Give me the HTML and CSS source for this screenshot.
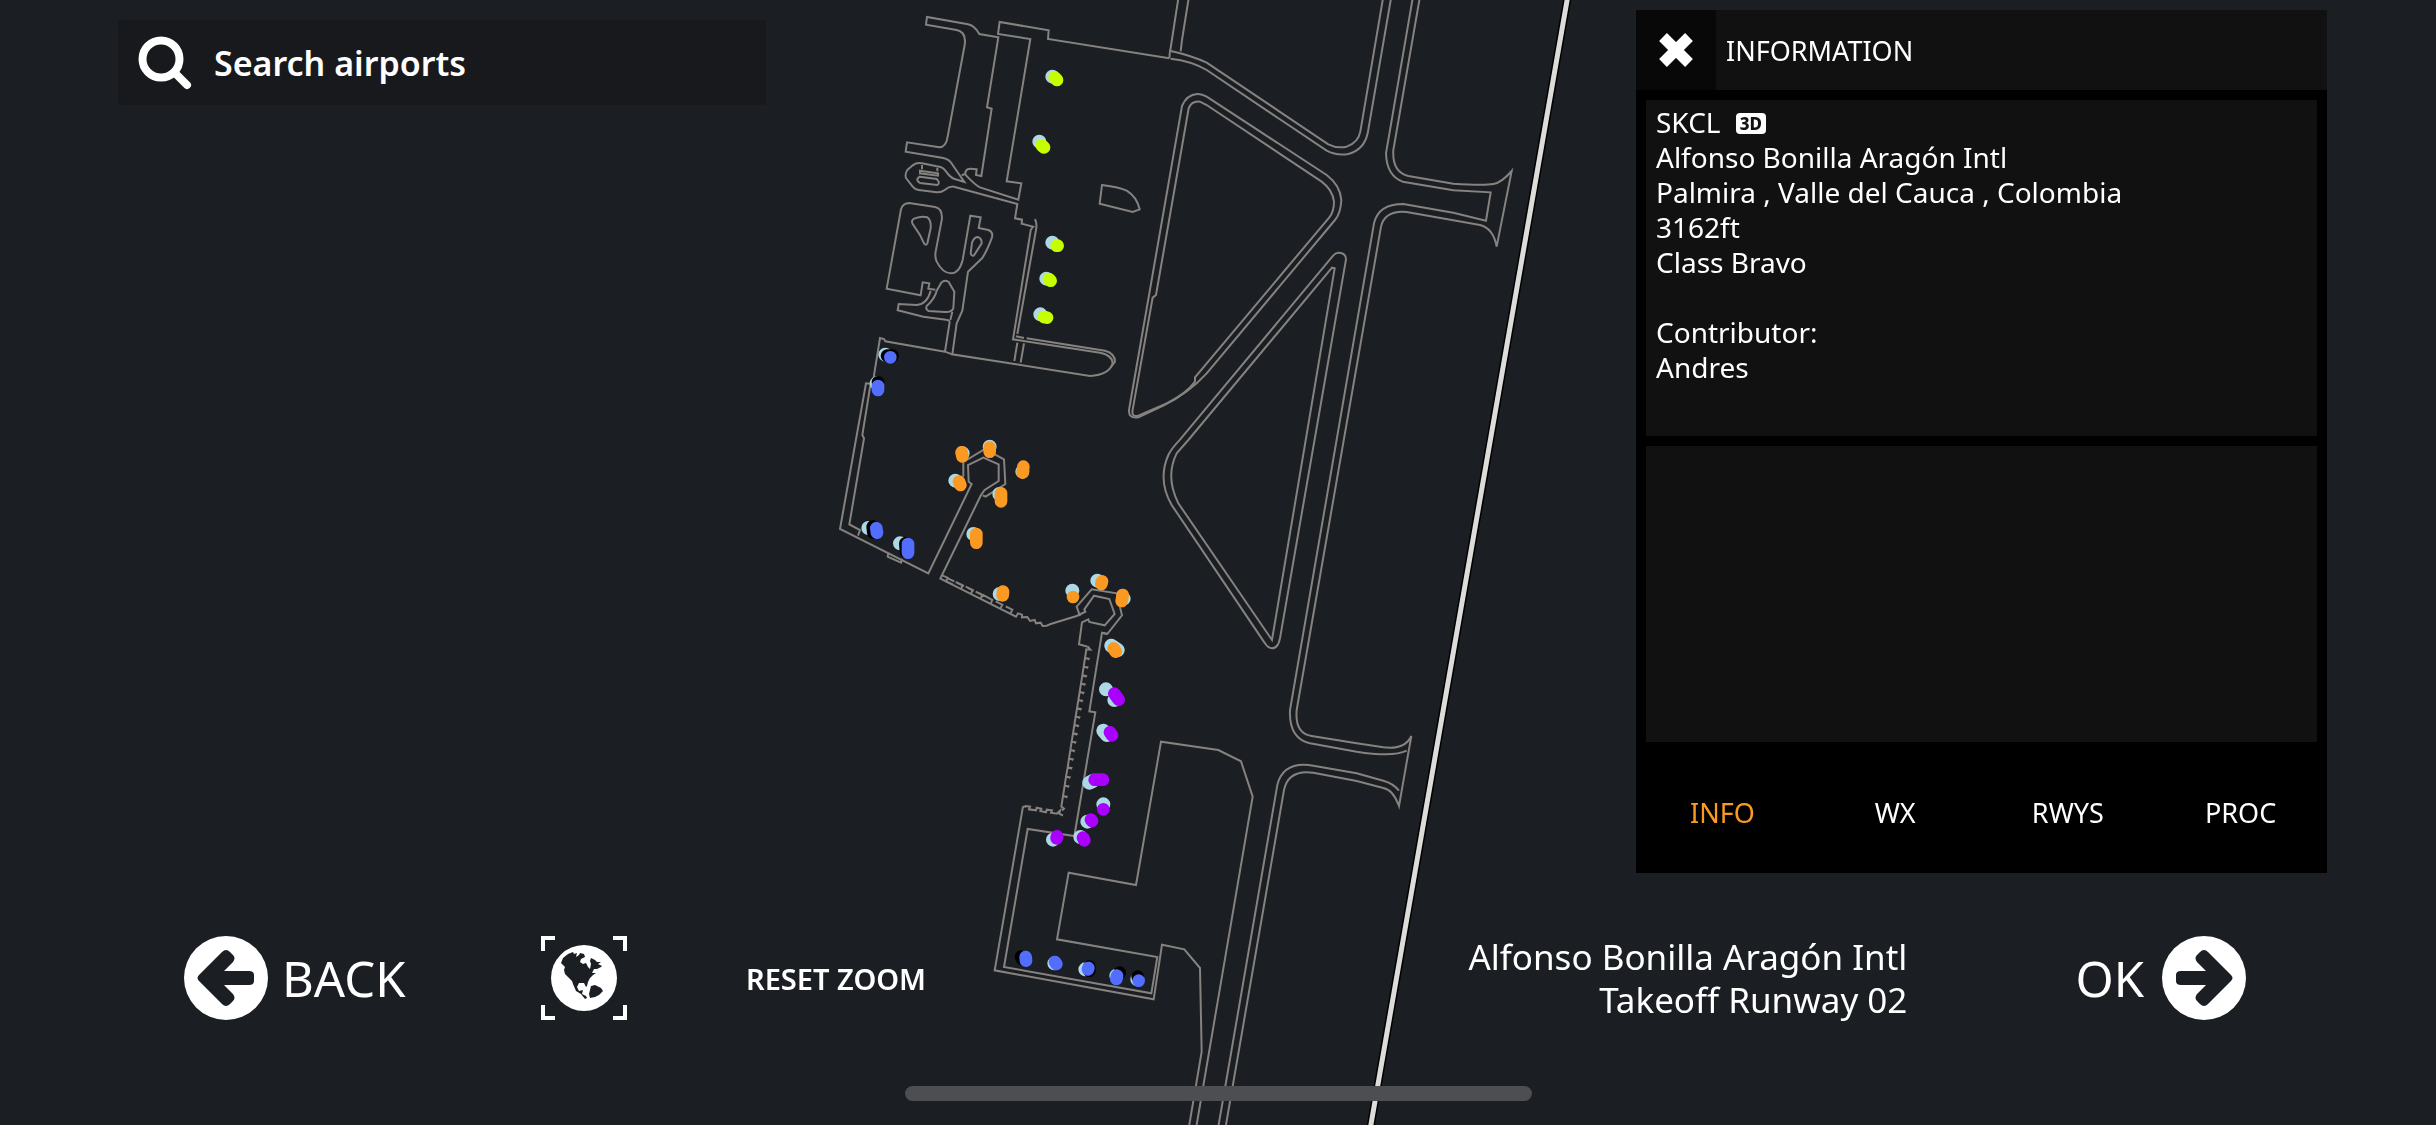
FILE: index.html
```html
<!DOCTYPE html>
<html lang="en">
<head>
  <meta charset="UTF-8">
  <meta name="viewport" content="width=device-width, initial-scale=1.0">
  <title>SKCL - Alfonso Bonilla Aragón Intl</title>
  <link rel="stylesheet" href="styles.css">
</head>
<body>
  <!-- Airport map -->
  <svg class="map" viewBox="0 0 2436 1125" preserveAspectRatio="xMidYMid slice" aria-hidden="true">
    <!-- Runway -->
    <path class="runway-edge" d="M1568 -5L1370 1130"/>
    <path class="runway" d="M1568 -5L1370 1130"/>

    <!-- North apron -->
    <g transform="translate(820 0) scale(.33333)">
      <path class="line" d="M1048 175L684 117L686 91L539 66L534 102L631 117L560 544L604 550L595 599L480 562Q468 557 438 526Q432 518 442 508Q448 504 470 508L468 525L484 528L515 326L501 322L535 112L478 102Q463 76 444 73L321 51L318 74L410 90Q440 96 434 135L383 410Q378 442 358 442L261 427L257 455L370 474Q388 478 396 492L433 546L404 537Q390 532 378 514Q368 500 350 499L306 490Q290 487 278 496L262 510Q254 522 258 534L278 560Q285 569 296 570L350 577Q364 578 374 570Q388 558 402 560L592 612L585 655L606 659L605 671L640 680Q630 690 632 692L579 1018L840 1058Q878 1066 878 1090Q868 1125 810 1128L397 1063L410 970L427 932L444 815L486 775Q500 755 516 712Q520 696 505 690L476 684L482 652L451 647L428 780Q418 820 393 820Q368 820 350 785Q344 770 347 755L366 655Q366 624 345 621L268 609Q248 610 243 628L200 866L302 886L308 847L328 850L325 866L346 869"/>
      <path class="line" d="M332 872Q322 912 290 915L236 912L233 931L310 950L378 959Q392 960 388 972L375 1055L397 1063M375 1055L196 1024L192 1017L180 1014L159 1145M397 935L391 960M425 526L434 522"/>
      <path class="line" d="M350 872L364 848Q374 838 386 846L403 875L400 925Q395 937 375 936L325 933Q316 928 320 918Q345 895 350 872ZM278 672Q272 660 284 655Q305 647 322 652Q334 660 332 685L322 730Q318 738 312 730L300 705ZM452 760L456 728Q462 712 472 711Q486 714 485 730L462 766Q455 770 452 760Z"/>
      <path class="line" d="M299 530L350 537Q362 548 352 555L300 549Q284 540 299 530ZM306 495V508M352 503V514M300 512L354 520V527L300 520Z"/>
      <path class="line" d="M645 657Q652 672 648 690L592 1002M588 1009L612 1014M620 1015L855 1052Q885 1060 885 1085L872 1102M592 1028L583 1083M612 1030L602 1088"/>
      <path class="line" d="M846 555Q900 562 920 572Q950 590 959 628L938 636L839 611Z"/>
    </g>

    <!-- Terminal apron -->
    <g transform="translate(820 330) scale(.33333)">
      <path class="line" d="M158 162L138 160L60 597L325 730L455 462L446 455L444 405L490 383L536 403V453L494 480L483 495L361 746L588 860L594 850L606 854V862L622 861L630 873L644 870L648 880L662 878L668 888L680 887L692 882L770 858L796 845L793 838L822 797L868 807L884 852L854 886L808 876L805 868L786 877L777 943L803 950"/>
      <path class="line" d="M430 440V396L495 357L552 388L556 462L497 500L488 496M152 160L127 315L132 325L88 583L120 600L114 617M205 668L203 680L243 698L246 686M780 858L770 830L815 778L890 790L906 856L862 912L846 908"/>
      <path class="line" d="M366 736L383 743L378 754L398 763M403 754L385 746M407 756L428 766L423 777M432 768L414 760M437 770L458 780L453 791M462 782L444 774M467 785L487 795L482 806M474 788L498 799M497 799L517 810L512 821M527 814L547 824L542 834M557 829L577 839L572 849"/>
    </g>

    <!-- Pier and south apron -->
    <g transform="translate(960 560) scale(.33333)">
      <path class="line" d="M442 222L426 218L388 454L406 457L343 828L203 807L132 1221L574 1300L592 1191L291 1138L326 938L528 975L603 545L775 570L843 604L878 710L709 1700"/>
      <path class="line" d="M198 740Q188 738 188 745L104 1231L581 1318L606 1154L673 1168L720 1224L725 1475L687 1700"/>
      <path class="line" d="M383 259L391 269L379 268L375 294L386 296L384 300M375 294L371 320L382 322L380 326M371 320L367 346L378 348L376 352M367 346L363 371L374 373L372 377M363 371L359 396L370 398L368 402M359 396L355 420L366 422L364 426M355 420L351 445L362 447L360 451M351 445L347 470L358 472L356 476M347 470L343 495L354 497L352 501M343 495L339 520L350 522L348 526M339 520L335 545L346 547L344 551M335 545L331 570L342 572L340 576M331 570L327 596L338 598L336 602M327 596L323 622L334 624L332 628M323 622L318 650L329 652L327 656M318 650L314 677L325 679L323 683M314 677L309 708L320 710L318 714M309 708L304 740L312 746L306 752"/>
      <path class="line" d="M195 738L210 740L207 748L228 751L230 743L244 746L241 753L258 757L260 749L276 751L273 758L290 761L300 752L298 761L309 767"/>
    </g>

    <!-- Taxiways -->
    <g transform="translate(1100 0) scale(.33333)">
      <path class="line" d="M235 -5L211 150M266 -5L246 120L242 154M208 175L210 152Q280 168 320 188L685 433Q710 446 740 440Q775 428 781 395L849 -5M212 176Q275 183 320 210L680 452Q710 468 745 462Q792 450 803 400L873 -5"/>
      <path class="line" d="M938 -5L858 460Q860 528 908 545L1060 571L1172 577L1158 662L1060 638L910 612Q835 612 822 670L570 2130Q566 2215 630 2230L770 2255Q880 2272 920 2252"/>
      <path class="line" d="M959 -5L880 450Q876 516 925 528L1060 551Q1150 557 1180 552Q1205 548 1235 513L1190 740Q1180 685 1140 675L920 636Q855 630 843 680L590 2130Q584 2200 635 2208L770 2230L850 2242Q915 2250 934 2208L897 2418Q880 2370 850 2364L770 2343L640 2318Q565 2308 552 2370L377 3380M897 2372Q880 2350 850 2342L770 2320L640 2297Q550 2282 532 2355L355 3380"/>
      <path class="line" d="M246 318Q260 284 292 282Q305 281 320 290L680 525Q720 555 724 600Q722 640 705 660L320 1120Q265 1180 190 1217Q150 1236 115 1252Q85 1257 87 1230Z"/>
      <path class="line" d="M266 325Q275 302 300 305L320 315L665 545Q698 570 702 605Q702 635 688 652L285 1132V1145Q260 1180 200 1210L115 1247Q97 1252 97 1235L158 893L168 885Z"/>
      <path class="line" d="M700 766Q708 757 718 758Q738 760 738 778L540 1915Q534 1945 516 1945Q504 1944 495 1930L215 1515Q172 1440 205 1365Q215 1345 240 1319Z"/>
      <path class="line" d="M696 803L704 805L516 1920L235 1510Q195 1430 230 1360L265 1320Z"/>
    </g>

    <!-- Stands: cargo -->
    <g transform="translate(820 0) scale(.33333)">
      <path class="dot pale" d="M697 230h0M658 425h0M697 728h0M679 836h0M661 943h0M196 1064h0M170 1150h0"/>
      <path class="dot lime" d="M704 232L711 240M665 436L672 442M710 737L713 737M687 837L692 842M672 951L681 953"/>
      <path class="dot dark" d="M201 1067L218 1067M174 1147h0"/>
      <path class="dot blue" d="M211 1072h0M174 1158V1170"/>
    </g>

    <!-- Stands: terminal -->
    <g transform="translate(820 330) scale(.33333)">
      <path class="dot pale" d="M428 370h0M509 350h0M607 425h0M406 452h0M538 492h0M460 612h0M539 792h0M757 782h0M832 752h0M911 806h0M874 947L893 960M145 594h0M240 640h0"/>
      <path class="dot orange" d="M425 367L427 379M509 353V365M610 410L608 428M417 455L421 465M543 490V514M469 612V638M549 785L548 796M759 801h0M846 754L844 762M908 795L905 813M881 955L887 965"/>
      <path class="dot dark" d="M158 590L160 608M256 640L258 665"/>
      <path class="dot blue" d="M169 595L171 608M264 642V668"/>
    </g>

    <!-- Stands: pier and south apron -->
    <g transform="translate(960 560) scale(.33333)">
      <path class="dot pale" d="M438 388h0M463 420h0M430 512L441 525M388 668L400 662M430 733h0M382 785h0M361 831h0M279 839h0M283 1210h0M376 1228h0M469 1247h0M532 1258h0"/>
      <path class="dot purple" d="M463 401L476 419M450 517L456 526M404 659H429M430 748h0M393 779L396 783M369 833L373 841M291 829L290 835"/>
      <path class="dot dark" d="M183 1190L187 1198M388 1220V1232M479 1238h0M533 1250h0"/>
      <path class="dot blue" d="M197 1191L198 1202M285 1206L289 1212M385 1224L384 1228M471 1247L469 1257M536 1262h0"/>
    </g>
  </svg>

  <div class="screen">
    <main class="top">
      <!-- Search -->
      <label class="search">
        <svg class="search-icon" viewBox="0 0 54 54" aria-hidden="true">
          <circle cx="23" cy="23" r="18.500"/>
          <path d="M37 37L49 49"/>
        </svg>
        <input type="text" placeholder="Search airports" aria-label="Search airports">
      </label>

      <!-- Information panel -->
      <section class="panel">
        <header class="panel-header">
          <button class="close" aria-label="Close">
            <svg viewBox="0 0 36 36" aria-hidden="true"><path d="M5 5L31 31M31 5L5 31"/></svg>
          </button>
          <h1>INFORMATION</h1>
        </header>
        <div class="panel-body">
          <div class="box box-details">
            <p>SKCL <span class="badge">3D</span></p>
            <p>Alfonso Bonilla Aragón Intl</p>
            <p>Palmira , Valle del Cauca , Colombia</p>
            <p>3162ft</p>
            <p>Class Bravo</p>
            <p class="contributor">Contributor:</p>
            <p>Andres</p>
          </div>
          <div class="box box-extra"></div>
        </div>
        <nav class="tabs">
          <button class="tab active">INFO</button>
          <button class="tab">WX</button>
          <button class="tab">RWYS</button>
          <button class="tab">PROC</button>
        </nav>
      </section>
    </main>

    <!-- Bottom bar -->
    <footer class="bottom">
      <button class="nav-btn back">
        <svg class="arrow" viewBox="0 0 84 84" aria-hidden="true">
          <circle cx="42" cy="42" r="42"/>
          <path d="M15 39L38 16Q42 12 46 16L49 19Q52 22 49 26L40 35H65Q70 35 70 39V45Q70 49 65 49H40L49 58Q52 62 49 65L46 68Q42 72 38 68L15 45Q12 42 15 39Z"/>
        </svg>
        <span>BACK</span>
      </button>
      <button class="globe-btn" aria-label="World map">
        <svg viewBox="0 0 86 84" aria-hidden="true">
          <path class="frame" d="M2 15V2H14M72 2H84V15M2 69V82H14M72 82H84V69"/>
          <circle cx="43" cy="42" r="33"/>
          <path class="land" d="M20 27L22 22L27 18L32 16L33 18L36 17L35 21L38 19L39 17L43 18L44 21L40 23L39 26L42 28L45 27L47 31L49 33L50 28L49 25L50 22L54 24L56 26H60L57 28L61 30L60 31L56 33L53 33L51 37L55 37L52 39L49 42L47 46L46 50L45 51L43 47L38 47L36 51L38 55L42 54L41 58L45 60L46 62L44 63L40 58L35 55L32 48L31 45L28 42L24 38L23 34L24 31Z"/>
          <path class="land" d="M50 50L54 49L60 52L62 55L58 59L54 61L49 62L48 58Z"/>
        </svg>
      </button>
      <button class="reset">RESET ZOOM</button>
      <div class="route">
        <p>Alfonso Bonilla Aragón Intl</p>
        <p>Takeoff Runway 02</p>
      </div>
      <button class="nav-btn ok">
        <span>OK</span>
        <svg class="arrow" viewBox="0 0 84 84" aria-hidden="true">
          <circle cx="42" cy="42" r="42"/>
          <path d="M69 39L46 16Q42 12 38 16L35 19Q32 22 35 26L44 35H19Q14 35 14 39V45Q14 49 19 49H44L35 58Q32 62 35 65L38 68Q42 72 46 68L69 45Q72 42 69 39Z"/>
        </svg>
      </button>
    </footer>
    <div class="home-bar"></div>
  </div>
</body>
</html>
```
FILE: styles.css
```css
* {
  margin: 0;
  padding: 0;
  box-sizing: border-box;
}

body {
  min-height: 100vh;
  font-family: "Noto Sans", sans-serif;
  background: #1b1e22;
  color: #fff;
  overflow: hidden;
}

button {
  border: none;
  background: none;
  color: inherit;
  font: inherit;
  cursor: pointer;
}

/* Map */
.map {
  position: fixed;
  top: 0;
  left: 0;
  width: 100%;
  height: 100%;
}

.map path {
  fill: none;
}

.line {
  stroke: #85827f;
  stroke-width: 6;
}

.runway {
  stroke: #dcdcda;
  stroke-width: 5;
}

.runway-edge {
  stroke: #000;
  stroke-width: 8;
}

.dot {
  stroke-width: 38;
  stroke-linecap: round;
}

.pale {
  stroke: #add8e6;
  stroke-width: 42;
}

.lime { stroke: #c6ff00; }
.orange { stroke: #fb9a23; }
.purple { stroke: #aa00ff; }
.blue { stroke: #536dfe; }
.dark { stroke: #000; }

/* Layout */
.screen {
  position: relative;
  display: flex;
  flex-direction: column;
  min-height: 100vh;
}

.top {
  display: flex;
  justify-content: space-between;
  align-items: flex-start;
  padding: 10px 109px 0 118px;
}

/* Search */
.search {
  display: flex;
  align-items: center;
  gap: 22px;
  flex: 0 1 648px;
  height: 85px;
  margin-top: 10px;
  padding-left: 20px;
  background: #18191c;
}

.search-icon {
  width: 54px;
  height: 54px;
  fill: none;
  stroke: #fff;
  stroke-width: 8;
  stroke-linecap: round;
}

.search input {
  flex: 1;
  min-width: 0;
  border: none;
  outline: none;
  background: none;
  color: #fff;
  font: 600 34px "Noto Sans", sans-serif;
}

.search input::placeholder {
  color: #fff;
  opacity: 1;
}

/* Information panel */
.panel {
  flex: 0 1 691px;
  background: #000;
}

.panel-header {
  display: flex;
  align-items: center;
  height: 80px;
  background: #111;
}

.panel-header h1 {
  padding-left: 10px;
  font-size: 27px;
  font-weight: 400;
}

.close {
  display: flex;
  align-items: center;
  justify-content: center;
  width: 80px;
  height: 80px;
  background: #080808;
}

.close svg {
  width: 36px;
  height: 36px;
  stroke: #fff;
  stroke-width: 11;
}

.panel-body {
  display: flex;
  flex-direction: column;
  gap: 10px;
  padding: 10px;
}

.box {
  padding: 5px 10px;
  background: #111;
  font-size: 28px;
  line-height: 35px;
}

.box-details {
  min-height: 336px;
}

.box-extra {
  min-height: 296px;
}

.badge {
  display: inline-block;
  margin-left: 8px;
  padding: 0 4px;
  border-radius: 4px;
  background: #fff;
  color: #111;
  font-size: 17px;
  font-weight: 800;
  line-height: 21px;
  vertical-align: 3px;
}

.contributor {
  margin-top: 35px;
}

.tabs {
  display: grid;
  grid-template-columns: repeat(4, 1fr);
  height: 121px;
}

.tab {
  font-size: 27px;
}

.tab.active {
  color: #fb9a23;
}

/* Bottom bar */
.bottom {
  display: flex;
  align-items: center;
  margin-top: auto;
  padding: 0 190px 65px 184px;
}

.nav-btn {
  display: flex;
  align-items: center;
  gap: 14px;
  font-size: 49px;
  line-height: 84px;
}

.back {
  flex: 0 0 357px;
}

.ok {
  gap: 18px;
}

.arrow {
  width: 84px;
  height: 84px;
  fill: #fff;
}

.arrow path {
  fill: #1b1e22;
}

.globe-btn svg {
  display: block;
  width: 86px;
  height: 84px;
  fill: #fff;
}

.globe-btn .land {
  fill: #1b1e22;
}

.globe-btn .frame {
  fill: none;
  stroke: #fff;
  stroke-width: 4;
}

.reset {
  margin-left: 119px;
  font-size: 29px;
  font-weight: 600;
}

.route {
  margin-left: auto;
  margin-right: 168px;
  font-size: 35px;
  line-height: 43px;
  text-align: right;
}

.home-bar {
  width: 627px;
  height: 15px;
  margin: 0 auto 24px;
  border-radius: 8px;
  background: #4c4e51;
}
```
